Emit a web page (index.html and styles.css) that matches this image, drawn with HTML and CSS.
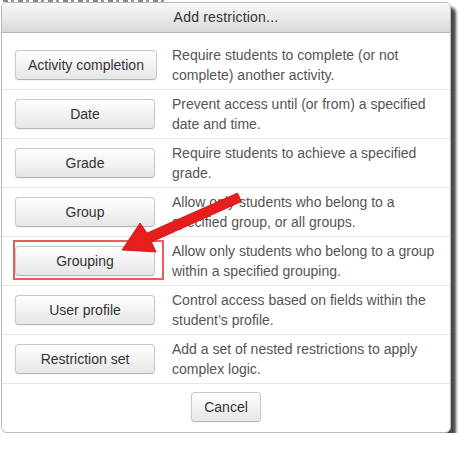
FILE: index.html
```html
<!DOCTYPE html>
<html>
<head>
<meta charset="utf-8">
<link rel="stylesheet" href="styles.css">
</head>
<body>
<div class="behind"></div>
<div class="dialog">
  <div class="dialog-header">Add restriction...</div>
  <div class="dialog-body">
    <div class="row">
      <button class="btn">Activity completion</button>
      <div class="desc">Require students to complete (or not complete) another activity.</div>
    </div>
    <div class="row">
      <button class="btn">Date</button>
      <div class="desc">Prevent access until (or from) a specified date and time.</div>
    </div>
    <div class="row">
      <button class="btn">Grade</button>
      <div class="desc">Require students to achieve a specified grade.</div>
    </div>
    <div class="row">
      <button class="btn">Group</button>
      <div class="desc">Allow only students who belong to a specified group, or all groups.</div>
    </div>
    <div class="row">
      <button class="btn">Grouping</button>
      <div class="desc">Allow only students who belong to a group within a specified grouping.</div>
    </div>
    <div class="row">
      <button class="btn">User profile</button>
      <div class="desc">Control access based on fields within the student’s profile.</div>
    </div>
    <div class="row">
      <button class="btn">Restriction set</button>
      <div class="desc">Add a set of nested restrictions to apply complex logic.</div>
    </div>
  </div>
  <div class="dialog-footer">
    <button class="btn btn-cancel">Cancel</button>
  </div>
  <div class="highlight"></div>
  <svg class="arrow" width="466" height="449" viewBox="0 0 466 449">
    <polygon points="122,250 156,252 151.5,242 241.5,201.5 237.5,193 147,233 140,223" fill="#e81d1d" stroke="#c40f0f" stroke-width="0.8" stroke-linejoin="round"/>
  </svg>
</div>
</body>
</html>
```

FILE: styles.css
```css
html, body {
  margin: 0;
  padding: 0;
  background: #ffffff;
}

body {
  font-family: "Liberation Sans", Arial, sans-serif;
  font-size: 14px;
  line-height: 20px;
  color: #333;
}

.behind {
  height: 2px;
  margin: 0 300px 0 3px;
  background: repeating-linear-gradient(90deg, #6b6b6b 0 5px, transparent 5px 8px, #8a7a6a 8px 11px, transparent 11px 15px);
  opacity: 0.8;
}

.dialog {
  position: relative;
  margin-left: 1px;
  width: 448px;
  border: 1px solid #b9b9b9;
  border-radius: 6px;
  background: #fff;
  box-shadow: 5px 5px 3px rgba(0, 0, 0, 0.72);
}

.dialog-header {
  height: 29px;
  line-height: 28px;
  text-align: center;
  color: #333;
  font-size: 14px;
  letter-spacing: 0.2px;
  background: linear-gradient(#f8f8f8, #d9d9d9);
  border-bottom: 1px solid #b4b4b4;
  border-radius: 5px 5px 0 0;
}

.dialog-body {
  padding-top: 8px;
}

.row {
  display: grid;
  grid-template-columns: 142px 1fr;
  column-gap: 15px;
  align-items: center;
  padding: 4px 10px 4px 13px;
  border-bottom: 1px solid #e6e6e6;
}

.btn {
  justify-self: start;
  min-width: 140px;
  height: 30px;
  padding: 0 12px;
  font-family: "Liberation Sans", Arial, sans-serif;
  font-size: 14px;
  line-height: 20px;
  color: #333;
  background: linear-gradient(#ffffff, #e6e6e6);
  border: 1px solid #c8c8c8;
  border-bottom-color: #b3b3b3;
  border-radius: 4px;
  box-shadow: inset 0 1px 0 rgba(255, 255, 255, 0.3), 0 1px 2px rgba(0, 0, 0, 0.05);
}

.desc {
  color: #555;
  line-height: 20px;
}

.dialog-footer {
  padding: 8px 0 10px;
  text-align: center;
}

.btn-cancel {
  min-width: 0;
}

.highlight {
  position: absolute;
  left: 11px;
  top: 237px;
  width: 151px;
  height: 40px;
  box-sizing: border-box;
  border: 2px solid #ea5b5b;
  pointer-events: none;
}

.arrow {
  position: absolute;
  left: -2px;
  top: -3px;
  pointer-events: none;
}
```
